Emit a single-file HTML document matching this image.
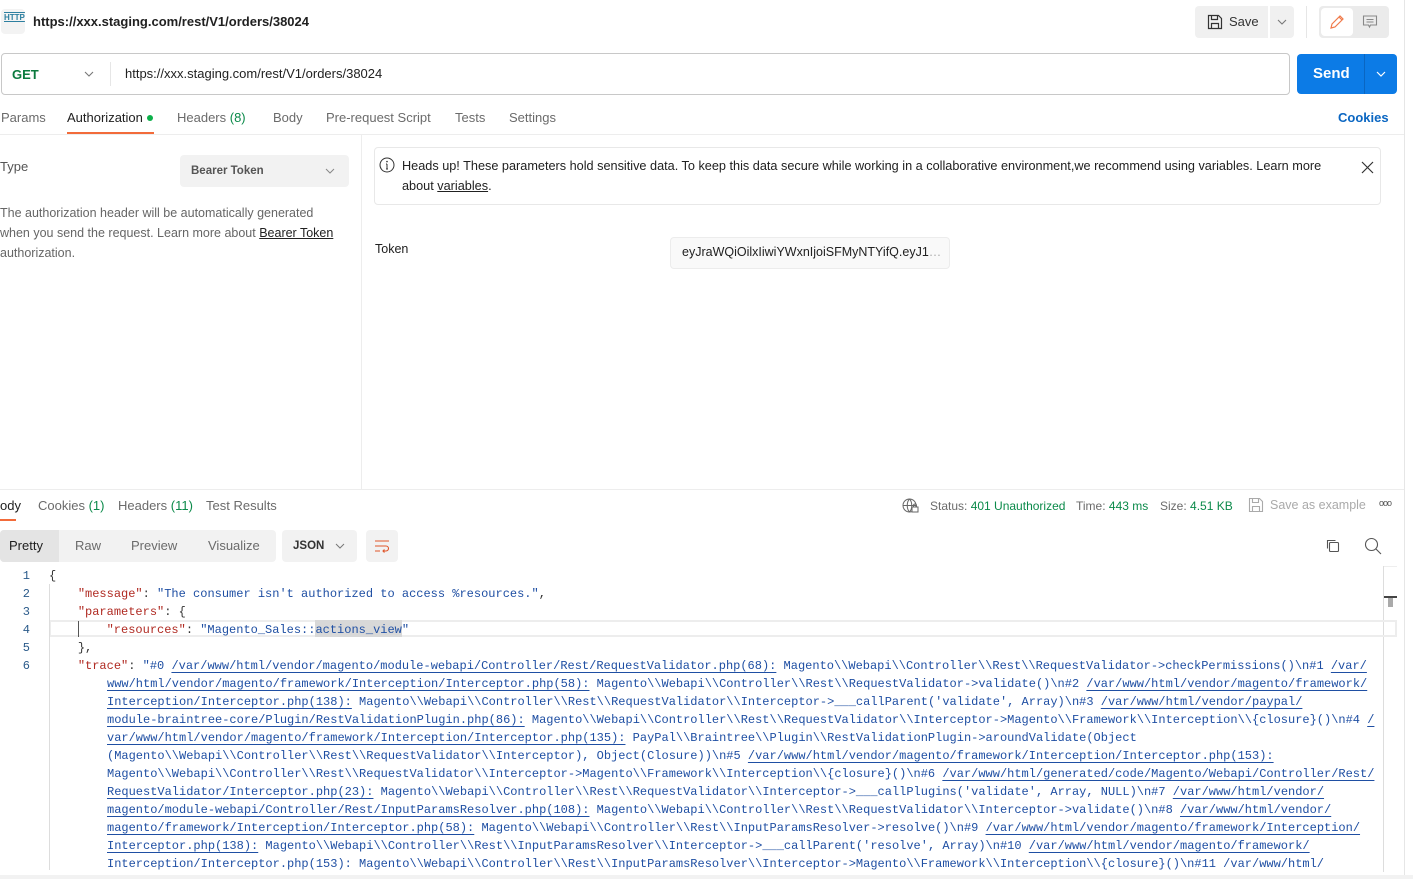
<!DOCTYPE html>
<html><head><meta charset="utf-8">
<style>
*{box-sizing:border-box;margin:0;padding:0}
body{width:1413px;height:879px;overflow:hidden;background:#fff;font-family:"Liberation Sans",Arial,sans-serif;color:#212121;position:relative;font-size:12px}
.a{position:absolute;white-space:nowrap}
.g{color:#6b6b6b}
.gr{color:#0b8a4a}
.code{font-family:"Liberation Mono",monospace;font-size:12px;color:#1f4fa3;white-space:pre;position:absolute;left:107px;line-height:18px}
.k{color:#b02a22}
.u{text-decoration:underline;text-underline-offset:3px}
.ln{position:absolute;left:14px;width:16px;text-align:right;font-family:"Liberation Mono",monospace;font-size:12px;color:#2a5a8a}
</style></head><body>
<div class="a" style="left:1404px;top:0;width:1px;height:879px;background:#e6e6e6"></div>
<div class="a" style="left:1px;top:9px;width:24px;height:25px;border-radius:4px;background:#f3f3f3"></div>
<div class="a" style="left:4px;top:13px;font-size:8px;color:#2d7fa0;font-weight:bold;text-decoration:underline overline">HTTP</div>
<div class="a" style="left:33px;top:14px;font-size:13px;font-weight:bold;color:#212121">https://xxx.staging.com/rest/V1/orders/38024</div>
<div class="a" style="left:1195px;top:6px;width:73px;height:32px;background:#f0f0f0;border-radius:4px 0 0 4px"></div>
<svg class="a" style="left:1207px;top:14px" width="16" height="16" viewBox="0 0 16 16" fill="none" stroke="#333" stroke-width="1.2"><path d="M1.5 1.5h10l3 3v10h-13z"/><path d="M4.5 1.5v4h6v-4M4.5 14.5v-5h7v5"/></svg>
<div class="a" style="left:1229px;top:14px;font-size:13px;color:#333">Save</div>
<div class="a" style="left:1270px;top:6px;width:24px;height:32px;background:#f0f0f0;border-radius:0 4px 4px 0"></div>
<svg class="a" style="left:1277px;top:18px" width="10" height="8" viewBox="0 0 10 8"><path d="M1 2l4 4 4-4" fill="none" stroke="#777" stroke-width="1.1"/></svg>
<div class="a" style="left:1306px;top:6px;width:1px;height:32px;background:#e6e6e6"></div>
<div class="a" style="left:1319px;top:6px;width:70px;height:32px;background:#ebebeb;border-radius:4px"></div>
<div class="a" style="left:1321px;top:8px;width:32px;height:28px;background:#fff;border-radius:4px"></div>
<svg class="a" style="left:1329px;top:14px" width="16" height="16" viewBox="0 0 16 16"><path d="M2 14l1-4 8-8 3 3-8 8z M10 3l3 3" fill="none" stroke="#f07a4a" stroke-width="1.2"/></svg>
<svg class="a" style="left:1362px;top:14px" width="16" height="16" viewBox="0 0 16 16"><path d="M1.5 2h13v9h-6l-1 2-1-2h-5z M4.5 5.5h7 M4.5 8h7" fill="none" stroke="#888" stroke-width="1.1"/></svg>
<div class="a" style="left:1px;top:53px;width:1289px;height:42px;border:1px solid #c8c8c8;border-radius:4px"></div>
<div class="a" style="left:12px;top:67px;font-size:13px;font-weight:bold;color:#0b7a3e">GET</div>
<svg class="a" style="left:84px;top:70px" width="10" height="8" viewBox="0 0 10 8"><path d="M1 2l4 4 4-4" fill="none" stroke="#777" stroke-width="1.1"/></svg>
<div class="a" style="left:110px;top:62px;width:1px;height:24px;background:#e6e6e6"></div>
<div class="a" style="left:125px;top:66px;font-size:13px;color:#212121">https://xxx.staging.com/rest/V1/orders/38024</div>
<div class="a" style="left:1297px;top:54px;width:100px;height:40px;background:#0c7be6;border-radius:4px"></div>
<div class="a" style="left:1364px;top:54px;width:1px;height:40px;background:#0a66c2"></div>
<div class="a" style="left:1313px;top:65px;font-size:15px;font-weight:bold;color:#fff">Send</div>
<svg class="a" style="left:1376px;top:70px" width="10" height="8" viewBox="0 0 10 8"><path d="M1 2l4 4 4-4" fill="none" stroke="#fff" stroke-width="1.2"/></svg>
<div class="a g" style="left:1px;top:110px;font-size:13px">Params</div>
<div class="a" style="left:67px;top:110px;font-size:13px;color:#212121">Authorization</div>
<div class="a" style="left:147px;top:115px;width:6px;height:6px;border-radius:3px;background:#0cb04a"></div>
<div class="a" style="left:67px;top:132px;width:87px;height:2px;background:#f26b3a"></div>
<div class="a g" style="left:177px;top:110px;font-size:13px">Headers <span class="gr">(8)</span></div>
<div class="a g" style="left:273px;top:110px;font-size:13px">Body</div>
<div class="a g" style="left:326px;top:110px;font-size:13px">Pre-request Script</div>
<div class="a g" style="left:455px;top:110px;font-size:13px">Tests</div>
<div class="a g" style="left:509px;top:110px;font-size:13px">Settings</div>
<div class="a" style="left:1338px;top:110px;font-size:13px;font-weight:bold;color:#0a66c2">Cookies</div>
<div class="a" style="left:0;top:134px;width:1404px;height:1px;background:#ededed"></div>
<div class="a" style="left:361px;top:135px;width:1px;height:355px;background:#ededed"></div>
<div class="a" style="left:0;top:159px;font-size:13px;color:#555">Type</div>
<div class="a" style="left:180px;top:155px;width:169px;height:32px;background:#f2f2f2;border-radius:4px"></div>
<div class="a" style="left:191px;top:165px;font-size:11.5px;font-weight:bold;color:#555">Bearer Token</div>
<svg class="a" style="left:325px;top:167px" width="10" height="8" viewBox="0 0 10 8"><path d="M1 2l4 4 4-4" fill="none" stroke="#888" stroke-width="1"/></svg>
<div class="a" style="left:0;top:203px;font-size:12.5px;line-height:20px;color:#666;white-space:normal;width:350px">The authorization header will be automatically generated<br>when you send the request. Learn more about <span style="color:#212121;text-decoration:underline">Bearer Token</span><br>authorization.</div>
<div class="a" style="left:374px;top:147px;width:1007px;height:58px;border:1px solid #e8e8e8;border-radius:4px"></div>
<svg class="a" style="left:379px;top:157px" width="16" height="16" viewBox="0 0 16 16"><circle cx="8" cy="8" r="7" fill="none" stroke="#333" stroke-width="1"/><path d="M8 7v5M7 7h1M7 12h2" stroke="#333" stroke-width="1"/><circle cx="8" cy="4.6" r=".8" fill="#333"/></svg>
<div class="a" style="left:402px;top:156px;font-size:12.7px;line-height:20px;color:#212121">Heads up! These parameters hold sensitive data. To keep this data secure while working in a collaborative environment,we recommend using variables. Learn more<br>about <span style="text-decoration:underline">variables</span>.</div>
<svg class="a" style="left:1361px;top:161px" width="13" height="13" viewBox="0 0 13 13"><path d="M1 1l11 11M12 1L1 12" stroke="#333" stroke-width="1.2"/></svg>
<div class="a" style="left:375px;top:242px;font-size:12.5px;color:#212121">Token</div>
<div class="a" style="left:670px;top:237px;width:280px;height:32px;border:1px solid #ececec;background:#f9f9f9;border-radius:4px"></div>
<div class="a" style="left:682px;top:245px;font-size:12.5px;color:#212121">eyJraWQiOilxIiwiYWxnIjoiSFMyNTYifQ.eyJ1<span style="color:#aaa">…</span></div>
<div class="a" style="left:0;top:489px;width:1404px;height:1px;background:#ededed"></div>
<div class="a" style="left:0;top:498px;font-size:13px;color:#212121">ody</div>
<div class="a" style="left:0;top:519px;width:16px;height:2px;background:#f26b3a"></div>
<div class="a g" style="left:38px;top:498px;font-size:13px">Cookies <span class="gr">(1)</span></div>
<div class="a g" style="left:118px;top:498px;font-size:13px">Headers <span class="gr">(11)</span></div>
<div class="a g" style="left:206px;top:498px;font-size:13px">Test Results</div>
<svg class="a" style="left:902px;top:498px" width="18" height="16" viewBox="0 0 18 16" fill="none" stroke="#666" stroke-width="1"><circle cx="7.5" cy="7.5" r="6.5"/><path d="M1 7.5h13M7.5 1c-3 3-3 10 0 13M7.5 1c3 3 3 10 0 13"/><rect x="10" y="9" width="6" height="5" fill="#fff"/><path d="M11.5 9v-1.5a1.5 1.5 0 0 1 3 0V9"/></svg>
<div class="a g" style="left:930px;top:499px;font-size:12px">Status: <span class="gr">401 Unauthorized</span></div>
<div class="a g" style="left:1076px;top:499px;font-size:12px">Time: <span class="gr">443 ms</span></div>
<div class="a g" style="left:1160px;top:499px;font-size:12px">Size: <span class="gr">4.51 KB</span></div>
<svg class="a" style="left:1248px;top:497px" width="16" height="16" viewBox="0 0 16 16" fill="none" stroke="#aaa" stroke-width="1.1"><path d="M1.5 1.5h10l3 3v10h-13z"/><path d="M4.5 1.5v4h6v-4M4.5 14.5v-5h7v5"/></svg>
<div class="a" style="left:1270px;top:498px;font-size:12.5px;color:#aaa">Save as example</div>
<div class="a" style="left:1379px;top:498px;font-size:9px;color:#555;letter-spacing:-1px">ooo</div>
<div class="a" style="left:0;top:530px;width:276px;height:32px;background:#f2f2f2;border-radius:4px"></div>
<div class="a" style="left:0;top:530px;width:59px;height:32px;background:#e4e4e4;border-radius:4px 0 0 4px"></div>
<div class="a" style="left:9px;top:538px;font-size:13px;color:#212121">Pretty</div>
<div class="a g" style="left:75px;top:538px;font-size:13px">Raw</div>
<div class="a g" style="left:131px;top:538px;font-size:13px">Preview</div>
<div class="a g" style="left:208px;top:538px;font-size:13px">Visualize</div>
<div class="a" style="left:282px;top:530px;width:75px;height:32px;background:#f2f2f2;border-radius:4px"></div>
<div class="a" style="left:293px;top:540px;font-size:11.5px;font-weight:bold;color:#333">JSON</div>
<svg class="a" style="left:335px;top:542px" width="10" height="8" viewBox="0 0 10 8"><path d="M1 2l4 4 4-4" fill="none" stroke="#777" stroke-width="1"/></svg>
<div class="a" style="left:366px;top:530px;width:32px;height:32px;background:#f2f2f2;border-radius:4px"></div>
<svg class="a" style="left:374px;top:538px" width="16" height="16" viewBox="0 0 16 16" fill="none" stroke="#e0552a" stroke-width="1.1"><path d="M1 3h14M1 8h11a2.5 2.5 0 0 1 0 5H9M10.5 11.5L9 13l1.5 1.5M1 13h5"/></svg>
<svg class="a" style="left:1325px;top:538px" width="16" height="16" viewBox="0 0 16 16" fill="none" stroke="#555" stroke-width="1.1"><rect x="4.5" y="4.5" width="9" height="9" rx="1"/><path d="M2.5 10.5v-8h8"/></svg>
<svg class="a" style="left:1364px;top:537px" width="18" height="18" viewBox="0 0 18 18" fill="none" stroke="#555" stroke-width="1.1"><circle cx="7.5" cy="7.5" r="6"/><path d="M12 12l5 5"/></svg>
<div class="a" style="left:1383px;top:566px;width:1px;height:306px;background:#ddd"></div>
<div class="a" style="left:1384px;top:566px;width:13px;height:1px;background:#eee"></div>
<div class="a" style="left:1384px;top:596px;width:13px;height:2px;background:#444"></div>
<div class="a" style="left:1388px;top:598px;width:5px;height:9px;background:#aaa"></div>
<div class="a" style="left:49px;top:620px;width:1348px;height:17px;border:2px solid #ededed"></div>
<div class="a" style="left:78px;top:621px;width:1px;height:16px;background:#555"></div>
<div class="a" style="left:49px;top:584px;width:1px;height:286px;background:#ddd"></div>
<div class="a" style="left:315px;top:620px;width:87px;height:17px;background:#d8d8d8"></div>
<div class="ln" style="top:567px;line-height:18px">1<br>2<br>3<br>4<br>5<br>6</div>
<div class="code" style="left:49px;top:567px"><span style="color:#333">{</span>
    <span class="k">"message"</span><span style="color:#333">: </span>"The consumer isn't authorized to access %resources."<span style="color:#333">,</span>
    <span class="k">"parameters"</span><span style="color:#333">: {</span>
        <span class="k">"resources"</span><span style="color:#333">: </span>"Magento_Sales::actions_view"
    <span style="color:#333">},</span>
    <span class="k">"trace"</span><span style="color:#333">: </span>"#0 <span class="u">/var/www/html/vendor/magento/module-webapi/Controller/Rest/RequestValidator.php(68):</span> Magento\\Webapi\\Controller\\Rest\\RequestValidator-&gt;checkPermissions()\n#1 <span class="u">/var/</span></div>
<div class="code" style="top:675px"><span class="u">www/html/vendor/magento/framework/Interception/Interceptor.php(58):</span> Magento\\Webapi\\Controller\\Rest\\RequestValidator-&gt;validate()\n#2 <span class="u">/var/www/html/vendor/magento/framework/</span>
<span class="u">Interception/Interceptor.php(138):</span> Magento\\Webapi\\Controller\\Rest\\RequestValidator\\Interceptor-&gt;___callParent('validate', Array)\n#3 <span class="u">/var/www/html/vendor/paypal/</span>
<span class="u">module-braintree-core/Plugin/RestValidationPlugin.php(86):</span> Magento\\Webapi\\Controller\\Rest\\RequestValidator\\Interceptor-&gt;Magento\\Framework\\Interception\\{closure}()\n#4 <span class="u">/</span>
<span class="u">var/www/html/vendor/magento/framework/Interception/Interceptor.php(135):</span> PayPal\\Braintree\\Plugin\\RestValidationPlugin-&gt;aroundValidate(Object
(Magento\\Webapi\\Controller\\Rest\\RequestValidator\\Interceptor), Object(Closure))\n#5 <span class="u">/var/www/html/vendor/magento/framework/Interception/Interceptor.php(153):</span>
Magento\\Webapi\\Controller\\Rest\\RequestValidator\\Interceptor-&gt;Magento\\Framework\\Interception\\{closure}()\n#6 <span class="u">/var/www/html/generated/code/Magento/Webapi/Controller/Rest/</span>
<span class="u">RequestValidator/Interceptor.php(23):</span> Magento\\Webapi\\Controller\\Rest\\RequestValidator\\Interceptor-&gt;___callPlugins('validate', Array, NULL)\n#7 <span class="u">/var/www/html/vendor/</span>
<span class="u">magento/module-webapi/Controller/Rest/InputParamsResolver.php(108):</span> Magento\\Webapi\\Controller\\Rest\\RequestValidator\\Interceptor-&gt;validate()\n#8 <span class="u">/var/www/html/vendor/</span>
<span class="u">magento/framework/Interception/Interceptor.php(58):</span> Magento\\Webapi\\Controller\\Rest\\InputParamsResolver-&gt;resolve()\n#9 <span class="u">/var/www/html/vendor/magento/framework/Interception/</span>
<span class="u">Interceptor.php(138):</span> Magento\\Webapi\\Controller\\Rest\\InputParamsResolver\\Interceptor-&gt;___callParent('resolve', Array)\n#10 <span class="u">/var/www/html/vendor/magento/framework/</span>
Interception/Interceptor.php(153): Magento\\Webapi\\Controller\\Rest\\InputParamsResolver\\Interceptor-&gt;Magento\\Framework\\Interception\\{closure}()\n#11 /var/www/html/</div>
<div class="a" style="left:0;top:875px;width:1413px;height:4px;background:#f2f2f2"></div>
</body></html>
